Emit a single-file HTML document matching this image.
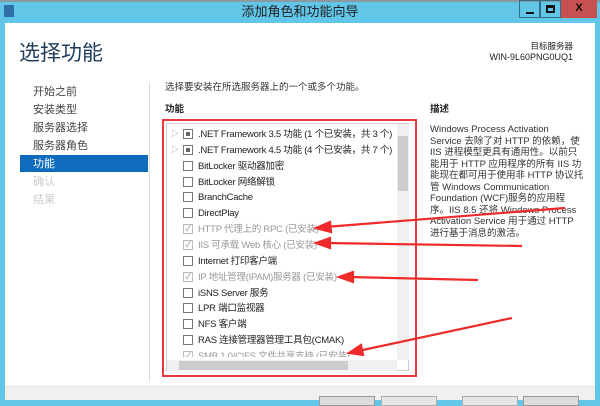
<!DOCTYPE html>
<html><head><meta charset="utf-8"><style>
*{margin:0;padding:0;box-sizing:border-box}
body{width:600px;height:400px;overflow:hidden;background:#62c6e8;font-family:"Liberation Sans","Noto Sans CJK SC",sans-serif;position:relative}
.a{position:absolute;white-space:nowrap}
#client{position:absolute;left:5px;top:23px;width:590px;height:377px;background:#fff}
.nav{font-size:11px;color:#444;line-height:14px}
.row{position:absolute;left:183px;font-size:9.5px;letter-spacing:-0.25px;color:#222;height:15px;line-height:15px;width:220px;white-space:nowrap}
.cb{position:absolute;left:0;top:2px;width:10px;height:10px;border:1px solid #777;background:#fff}
.row span{position:absolute;left:15px;top:0;white-space:nowrap}
.dis{color:#999}
.dis .cb{border-color:#bbb;font-size:8px;line-height:8px;color:#999;text-align:center}
.fill{position:absolute;left:2px;top:2px;width:4px;height:4px;background:#666}
.desc{font-size:9.5px;color:#333;line-height:11.5px}
.btn{position:absolute;top:396px;width:56px;height:10px;border:1px solid #adadad;background:#e5e5e5}
#list{position:absolute;left:0;top:0;width:397px;height:357px;overflow:hidden}
</style></head><body>
<div class="a" style="left:0;top:0;width:600px;height:2px;background:#8a9aa0"></div>
<div class="a" style="left:4px;top:5px;width:10px;height:12px;background:#2d6fa6"></div>
<div class="a" style="left:0;top:4px;width:600px;text-align:center;font-size:13px;line-height:16px;color:#222">添加角色和功能向导</div>
<div class="a" style="left:519px;top:0;width:21px;height:18px;border:1px solid #2f6f8a"><div class="a" style="left:6px;top:11px;width:8px;height:2px;background:#111"></div></div>
<div class="a" style="left:540px;top:0;width:21px;height:18px;border:1px solid #2f6f8a"><div class="a" style="left:5px;top:4px;width:9px;height:8px;border:2px solid #111;border-top-width:3px"></div></div>
<div class="a" style="left:561px;top:0;width:36px;height:18px;background:#c75050;color:#111;font-weight:bold;font-size:11px;text-align:center;line-height:16px">X</div>
<div id="client"></div>
<div class="a" style="left:19px;top:40px;font-size:21px;line-height:28px;color:#1e3c5a">选择功能</div>
<div class="a" style="left:480px;top:41px;font-size:8.5px;line-height:10px;color:#222;text-align:right;width:93px">目标服务器</div>
<div class="a" style="left:470px;top:52px;font-size:9px;line-height:10px;color:#222;text-align:right;width:103px">WIN-9L60PNG0UQ1</div>
<div class="a" style="left:149px;top:82px;width:1px;height:300px;background:#ddd"></div>
<div class="a nav" style="left:33px;top:85px">开始之前</div>
<div class="a nav" style="left:33px;top:103px">安装类型</div>
<div class="a nav" style="left:33px;top:121px">服务器选择</div>
<div class="a nav" style="left:33px;top:139px">服务器角色</div>
<div class="a" style="left:20px;top:155px;width:128px;height:17px;background:#0f6cbd"></div>
<div class="a nav" style="left:33px;top:157px;color:#fff">功能</div>
<div class="a nav" style="left:33px;top:175px;color:#ccc">确认</div>
<div class="a nav" style="left:33px;top:193px;color:#ccc">结果</div>
<div class="a" style="left:165px;top:82px;font-size:9.5px;line-height:12px;color:#333">选择要安装在所选服务器上的一个或多个功能。</div>
<div class="a" style="left:165px;top:104px;font-size:9.5px;line-height:12px;color:#222;font-weight:bold">功能</div>
<div class="a" style="left:430px;top:104px;font-size:9.5px;line-height:12px;color:#222;font-weight:bold">描述</div>
<div class="a" style="left:162px;top:119px;width:255px;height:258px;border:2px solid #e8383d"></div>
<div class="a" style="left:166px;top:123px;width:243px;height:248px;border:1px solid #ccc"></div>
<div class="a" style="left:397px;top:124px;width:12px;height:236px;background:#f0f0f0"></div>
<div class="a" style="left:398px;top:136px;width:10px;height:55px;background:#cdcdcd"></div>
<div class="a" style="left:167px;top:360px;width:230px;height:11px;background:#f0f0f0"></div>
<div class="a" style="left:179px;top:361px;width:169px;height:9px;background:#cdcdcd"></div>
<div class="a" style="left:171px;top:128px;font-size:8px;color:#999">▷</div>
<div class="a" style="left:171px;top:144px;font-size:8px;color:#999">▷</div>
<div id="list">
<div class="row" style="top:127px"><div class="cb"><div class="fill"></div></div><span>.NET Framework 3.5 功能 (1 个已安装，共 3 个)</span></div>
<div class="row" style="top:143px"><div class="cb"><div class="fill"></div></div><span>.NET Framework 4.5 功能 (4 个已安装，共 7 个)</span></div>
<div class="row" style="top:159px"><div class="cb"></div><span>BitLocker 驱动器加密</span></div>
<div class="row" style="top:175px"><div class="cb"></div><span>BitLocker 网络解锁</span></div>
<div class="row" style="top:190px"><div class="cb"></div><span>BranchCache</span></div>
<div class="row" style="top:206px"><div class="cb"></div><span>DirectPlay</span></div>
<div class="row dis" style="top:222px"><div class="cb">✓</div><span>HTTP 代理上的 RPC (已安装)</span></div>
<div class="row dis" style="top:238px"><div class="cb">✓</div><span>IIS 可承载 Web 核心 (已安装)</span></div>
<div class="row" style="top:254px"><div class="cb"></div><span>Internet 打印客户端</span></div>
<div class="row dis" style="top:270px"><div class="cb">✓</div><span>IP 地址管理(IPAM)服务器 (已安装)</span></div>
<div class="row" style="top:286px"><div class="cb"></div><span>iSNS Server 服务</span></div>
<div class="row" style="top:301px"><div class="cb"></div><span>LPR 端口监视器</span></div>
<div class="row" style="top:317px"><div class="cb"></div><span>NFS 客户端</span></div>
<div class="row" style="top:333px"><div class="cb"></div><span>RAS 连接管理器管理工具包(CMAK)</span></div>
<div class="row dis" style="top:349px"><div class="cb">✓</div><span>SMB 1.0/CIFS 文件共享支持 (已安装)</span></div>
</div>
<div class="a desc" style="left:430px;top:124px">Windows Process Activation<br>Service 去除了对 HTTP 的依赖，使<br>IIS 进程模型更具有通用性。以前只<br>能用于 HTTP 应用程序的所有 IIS 功<br>能现在都可用于使用非 HTTP 协议托<br>管 Windows Communication<br>Foundation (WCF)服务的应用程<br>序。IIS 8.5 还将 Windows Process<br>Activation Service 用于通过 HTTP<br>进行基于消息的激活。</div>
<div class="a" style="left:5px;top:386px;width:590px;height:1px;background:#e4e4e4"></div>
<div class="a" style="left:5px;top:387px;width:590px;height:13px;background:#f0f0f0"></div>
<div class="btn" style="left:319px;border-color:#999;background:#dcdcdc"></div>
<div class="btn" style="left:381px"></div>
<div class="btn" style="left:462px"></div>
<div class="btn" style="left:523px;border-color:#999;background:#dcdcdc"></div>
<svg class="a" style="left:0;top:0" width="600" height="400">
<g stroke="#ee2a2a" stroke-width="2.2" fill="#ee2a2a">
<line x1="565" y1="208" x2="325" y2="227"/><polygon points="316,228 330,222 331,232"/>
<line x1="522" y1="246" x2="325" y2="243"/><polygon points="316,243 330,238 330,248"/>
<line x1="478" y1="280" x2="348" y2="277"/><polygon points="339,277 353,272 353,282"/>
<line x1="512" y1="318" x2="358" y2="351"/><polygon points="349,353 361,345 363,355"/>
</g></svg>
</body></html>
